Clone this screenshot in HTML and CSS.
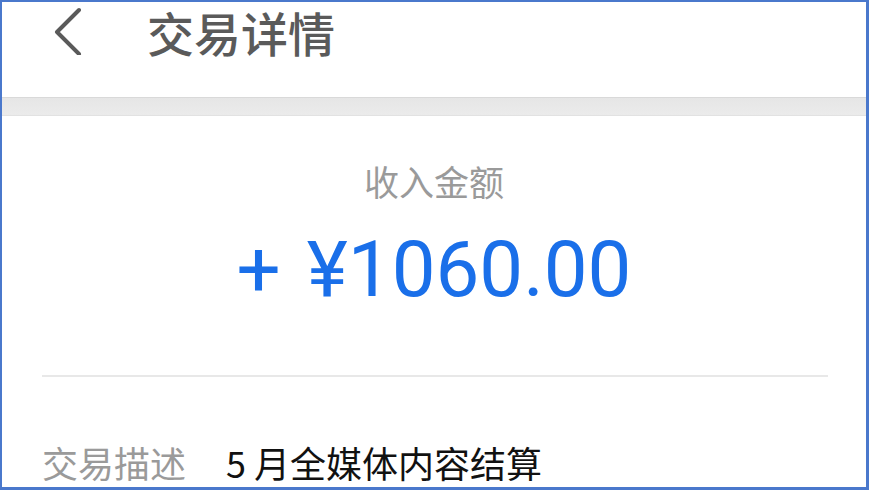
FILE: index.html
```html
<!DOCTYPE html>
<html lang="zh-CN">
<head>
<meta charset="utf-8">
<title>交易详情</title>
<link rel="stylesheet" href="styles.css">
</head>
<body>
<div class="frame">
  <header class="topbar">
    <span class="back" aria-label="返回">
      <svg width="30" height="50" viewBox="0 0 30 50"><polyline points="25,5 3,27 25,49" fill="none" stroke="#5a5a5a" stroke-width="4" stroke-linecap="round" stroke-linejoin="round"/></svg>
    </span>
    <h1 class="title">交易详情</h1>
  </header>
  <div class="band"></div>
  <main class="content">
    <div class="label">收入金额</div>
    <div class="amount"><span class="sign">+</span>¥1060.00</div>
    <div class="divider"></div>
    <div class="row">
      <span class="row-key">交易描述</span>
      <span class="row-val">5 月全媒体内容结算</span>
    </div>
  </main>
</div>
</body>
</html>
```
FILE: styles.css
```css
html, body {
  margin: 0;
  padding: 0;
  background: #ffffff;
}
.frame {
  width: 869px;
  height: 490px;
  box-sizing: border-box;
  border: 2px solid #4a78cc;
  border-right-width: 3px;
  border-bottom-width: 3px;
  overflow: hidden;
  font-family: "Noto Sans CJK SC", "Noto Sans", sans-serif;
  background: #ffffff;
}
.topbar {
  height: 95px;
  display: flex;
  align-items: flex-start;
  padding-left: 52px;
}
.back {
  display: block;
  width: 30px;
  height: 50px;
  margin-top: 3px;
}
.back svg { display: block; }
.title {
  margin: 0 0 0 63px;
  font-size: 47px;
  font-weight: 500;
  line-height: 60px;
  color: #5a5a5a;
  letter-spacing: 0;
}
.band {
  height: 19px;
  box-sizing: border-box;
  border-top: 1px solid #d9d9d9;
  border-bottom: 1px solid #e2e2e2;
  background: linear-gradient(#e6e6e6, #ebebeb);
}
.content {
  display: flex;
  flex-direction: column;
}
.label {
  margin-top: 40px;
  text-align: center;
  font-size: 35px;
  line-height: 50px;
  color: #9a9a9a;
}
.amount {
  margin-top: 19px;
  text-align: center;
  font-family: Roboto, "Noto Sans", sans-serif;
  font-size: 78px;
  line-height: 90px;
  color: #1a6fe9;
}
.sign {
  margin-right: 26px;
}
.divider {
  margin: 60px 38px 0 40px;
  height: 2px;
  background: #e8e8e8;
}
.row {
  margin-top: 60px;
  padding-left: 40px;
  display: flex;
  align-items: center;
  line-height: 50px;
  font-size: 36px;
}
.row-key {
  color: #9a9a9a;
}
.row-val {
  margin-left: 40px;
  color: #111111;
}
```
